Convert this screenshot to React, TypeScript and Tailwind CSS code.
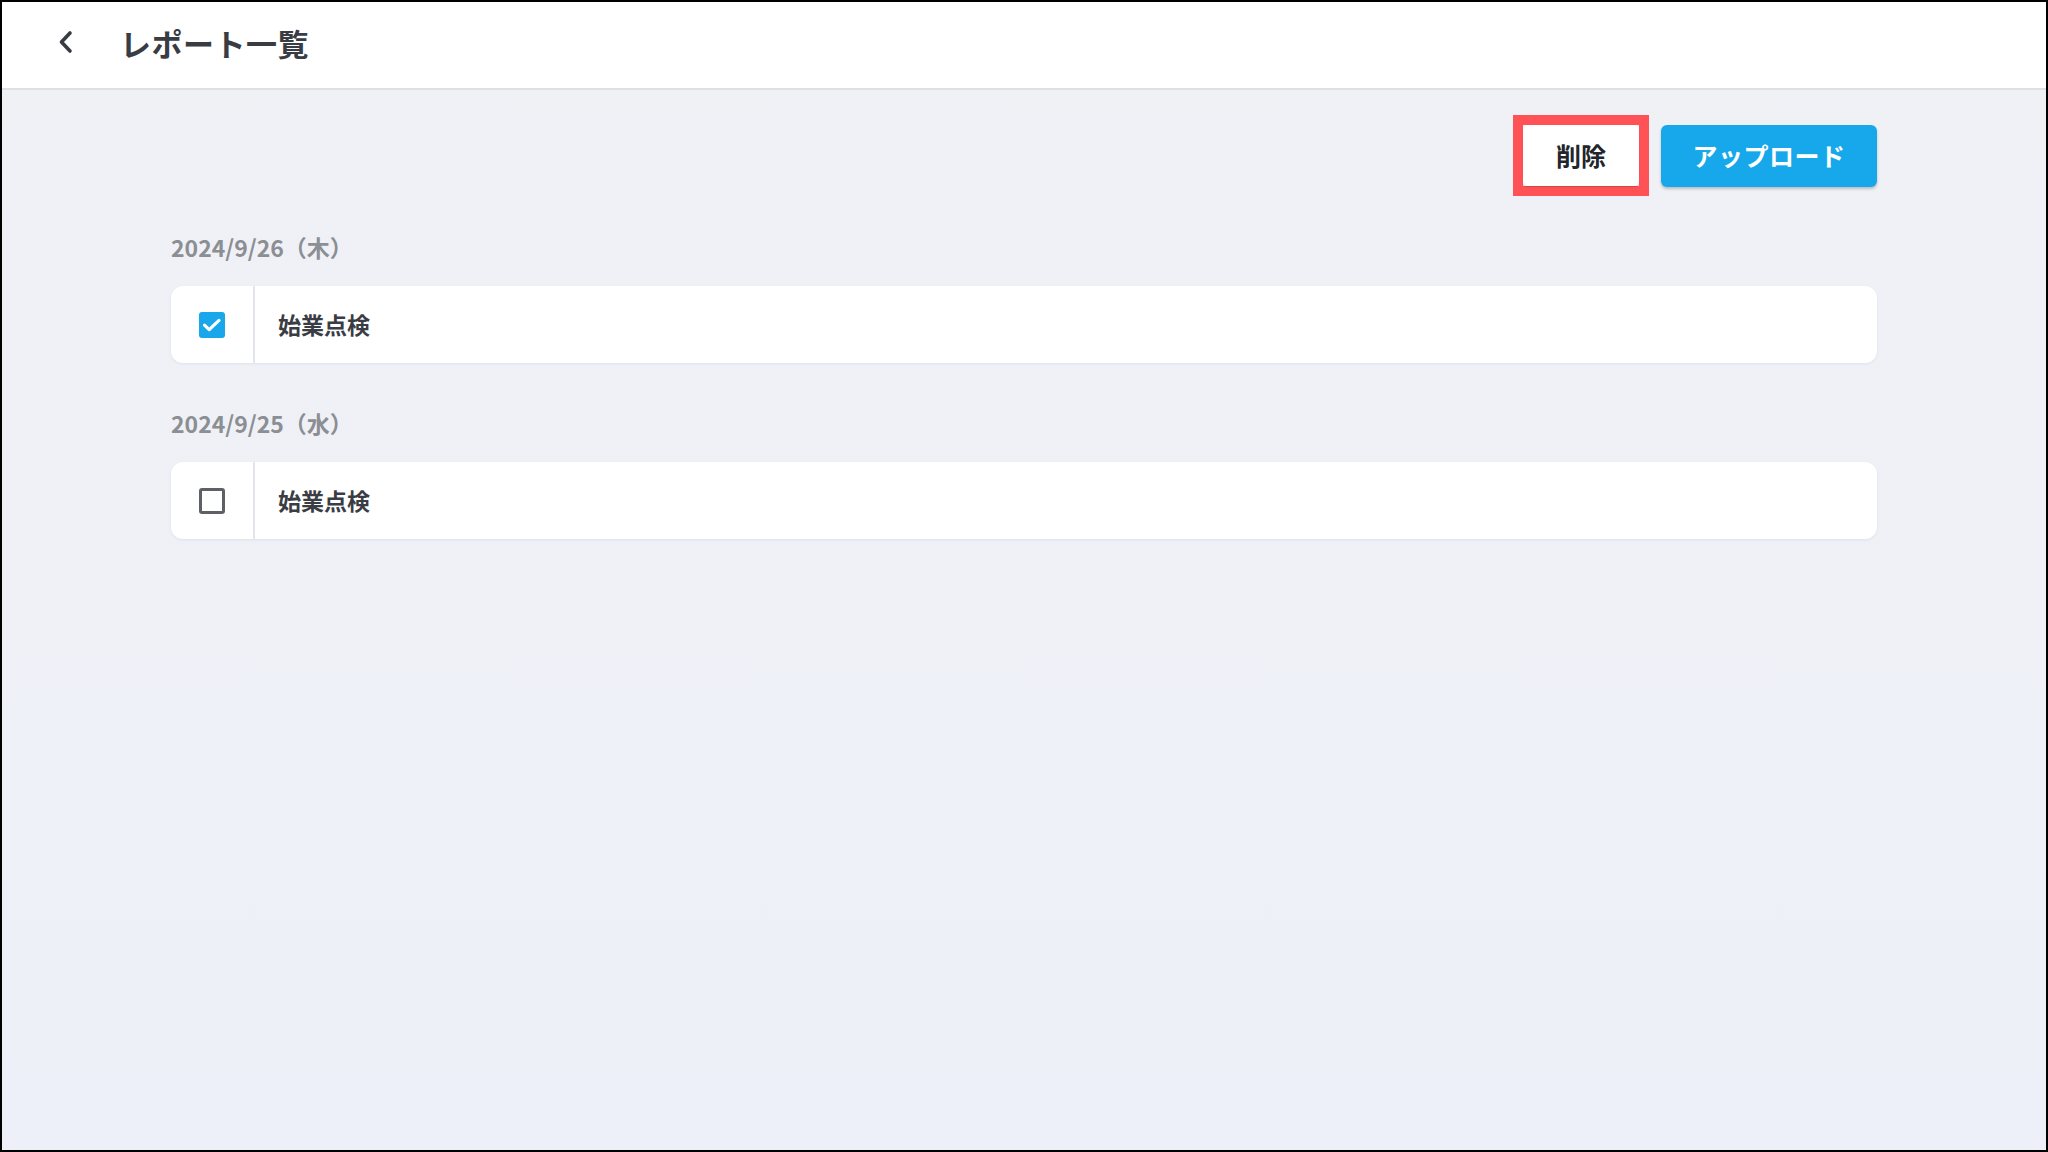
import { useState } from "react";

type Report = { id: string; date: string; title: string; checked: boolean };

const initialReports: Report[] = [
  { id: "r1", date: "2024/9/26（木）", title: "始業点検", checked: true },
  { id: "r2", date: "2024/9/25（水）", title: "始業点検", checked: false },
];

function ChevronLeft() {
  return (
    <svg width="18" height="24" viewBox="0 0 18 24" fill="none">
      <path d="M13 3 L4.5 12 L13 21" stroke="#383b42" strokeWidth="3.6" strokeLinecap="round" strokeLinejoin="round" />
    </svg>
  );
}

function Checkbox({ checked, onToggle }: { checked: boolean; onToggle: () => void }) {
  return (
    <button
      onClick={onToggle}
      className={
        checked
          ? "w-[26px] h-[26px] rounded-[3px] bg-[#17a7ea] flex items-center justify-center"
          : "w-[26px] h-[26px] rounded-[3px] border-[3px] border-[#5d6065] bg-white"
      }
    >
      {checked && (
        <svg width="20" height="16" viewBox="0 0 20 16" fill="none">
          <path d="M2.5 8.2 L7.2 12.6 L17 3.4" stroke="white" strokeWidth="3.2" strokeLinecap="round" strokeLinejoin="round" />
        </svg>
      )}
    </button>
  );
}

export default function App() {
  const [reports, setReports] = useState(initialReports);

  const toggle = (id: string) =>
    setReports(prev => prev.map(r => (r.id === id ? { ...r, checked: !r.checked } : r)));

  return (
    <div
      className="w-[2048px] h-[1152px] border-2 border-black flex flex-col bg-linear-to-b from-[#f0f1f5] to-[#edf0f8] overflow-hidden"
      style={{ fontFamily: '"Noto Sans CJK JP", "Noto Sans", sans-serif' }}
    >
      {/* Header */}
      <header className="h-[88px] shrink-0 bg-white border-b-2 border-[#dde0e6] flex items-center pb-[6px]">
        <button className="ml-[54px] w-[20px] h-[24px] flex items-center justify-center">
          <ChevronLeft />
        </button>
        <h1 className="ml-[44px] text-[31px] font-bold text-[#393c43] leading-none tracking-[0.5px]">レポート一覧</h1>
      </header>

      <main className="w-[1706px] mx-auto flex flex-col">
        {/* Actions */}
        <div className="flex justify-end items-center gap-[12px] pt-[25px]">
          <div className="border-[10px] border-[#fe5257]">
            <button className="w-[116px] h-[61px] bg-white rounded-[4px] shadow-[0_1px_1px_rgba(0,0,0,0.18)] text-[25px] font-bold text-[#22252b]">
              削除
            </button>
          </div>
          <button className="w-[216px] h-[62px] bg-[#16a8ea] rounded-[6px] shadow-[0_2px_3px_rgba(0,0,0,0.22)] text-[25px] font-bold text-white tracking-[0.5px]">
            アップロード
          </button>
        </div>

        {/* Reports */}
        <div className="flex flex-col">
          {reports.map((r, i) => (
            <div key={r.id} className={i === 0 ? "flex flex-col mt-[35px]" : "flex flex-col mt-[44px]"}>
              <div className="h-[32px] flex items-center text-[23px] font-bold text-[#8b8e93]">{r.date}</div>
              <div className="mt-[23px] h-[77px] bg-white rounded-[12px] shadow-[0_1px_3px_rgba(30,40,70,0.07)] flex items-stretch">
                <div className="w-[84px] shrink-0 flex items-center justify-center border-r-2 border-[#e3e5ec]">
                  <Checkbox checked={r.checked} onToggle={() => toggle(r.id)} />
                </div>
                <div className="flex items-center pl-[23px] text-[23px] font-bold text-[#3a3d44]">{r.title}</div>
              </div>
            </div>
          ))}
        </div>
      </main>
    </div>
  );
}
